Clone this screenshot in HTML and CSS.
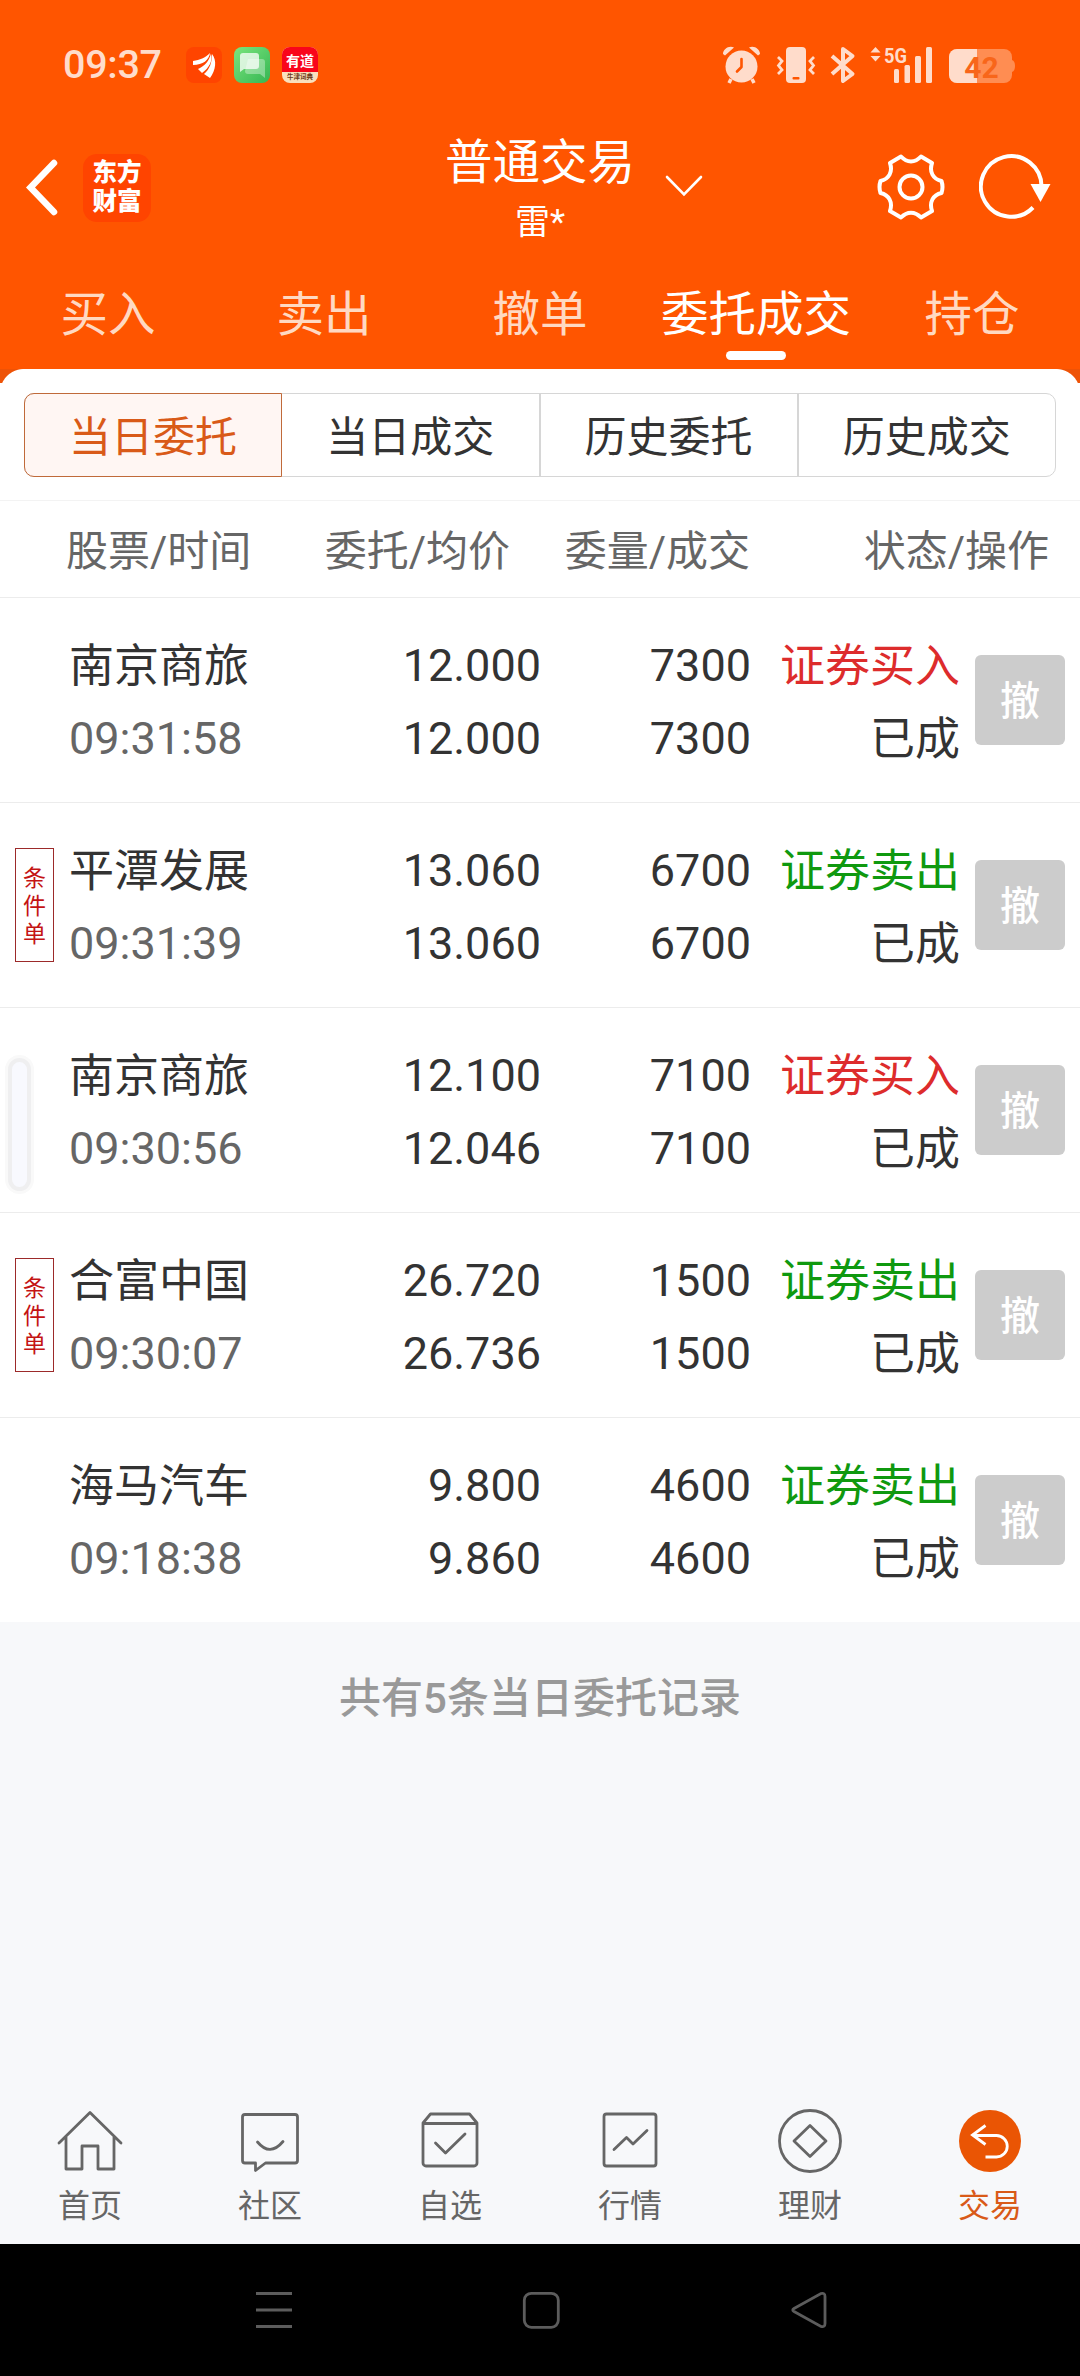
FILE: index.html
```html
<!DOCTYPE html>
<html lang="zh-CN">
<head>
  <meta charset="UTF-8" />
  <meta name="viewport" content="width=device-width, initial-scale=1" />
  <title>普通交易</title>
  <link rel="stylesheet" href="styles.css">
</head>
<body>

<header class="header">
  <div class="status-bar">
    <span class="clock">09:37</span>
    <div class="notifications">
      <div class="app app-em">
        <svg width="36" height="36" viewBox="0 0 36 36" fill="#fff">
          <path d="M7 14C14 13 19 11 24 6C23 13 17 18 7 18Z" />
          <path d="M12 22C19 19 23 14 25 6.500C27 14 23 21 16 26Z" />
          <path d="M18 27C24 22 26 15 26 7C31 13 30 23 24 31Z" />
        </svg>
      </div>
      <div class="app app-sms">
        <svg width="36" height="36" viewBox="0 0 36 36">
          <path d="M14 12H28a3 3 0 0 1 3 3V31L26 27H14a3 3 0 0 1-3-3Z" fill="#fff" opacity=".35" />
          <path d="M9 6H22a3 3 0 0 1 3 3V19a3 3 0 0 1-3 3H10L6 25V9a3 3 0 0 1 3-3Z" fill="#fff" opacity=".75" />
        </svg>
      </div>
      <div class="app app-youdao">
        <span class="youdao-name">有道</span>
        <span class="youdao-sub">牛津词典</span>
      </div>
    </div>
    <svg class="system-icons" width="300" height="44" viewBox="0 0 300 44" fill="#ffdccb">
      <!-- alarm -->
      <circle cx="21.500" cy="23.500" r="16" />
      <path d="M3 11C3 6 9 2 14 4.500L5 12.500ZM40 11C40 6 34 2 29 4.500L38 12.500Z" />
      <path d="M11 36L9 40M32 36L34 40" stroke="#ffdccb" stroke-width="3.500" />
      <path d="M21.500 16V24L17 28.500" fill="none" stroke="#ff5500" stroke-width="2.600" stroke-linecap="round" stroke-linejoin="round" />
      <!-- vibrate -->
      <rect x="66" y="4" width="20" height="36" rx="4" />
      <rect x="72.500" y="34" width="7" height="2.400" rx="1" fill="#ff5500" />
      <path d="M58 14L62 18L58.500 22.500L62 27L58 31M94 14L90 18L93.500 22.500L90 27L94 31" fill="none" stroke="#ffdccb" stroke-width="2.800" />
      <!-- bluetooth -->
      <path d="M112 13L132.500 31L123 38V6L132.500 13L112 31" fill="none" stroke="#ffdccb" stroke-width="4" stroke-linejoin="round" />
      <!-- mobile signal -->
      <path d="M150.500 9.500L155.500 4L160.500 9.500ZM150.500 13L155.500 18.500L160.500 13Z" />
      <text class="net" x="164" y="19.500" textLength="23" lengthAdjust="spacingAndGlyphs">5G</text>
      <rect x="174" y="26" width="5" height="14" rx="1.500" />
      <rect x="184.500" y="22" width="5.500" height="18" rx="1.500" />
      <rect x="195" y="13" width="6" height="27" rx="1.500" />
      <rect x="206" y="4" width="6" height="36" rx="1.500" />
      <!-- battery -->
      <rect x="229" y="6" width="63" height="34" rx="8" fill="#ff8d52" />
      <path d="M292 17Q295 18 295 23T292 29Z" fill="#ff8d52" />
      <path d="M257 6H237a8 8 0 0 0-8 8V32a8 8 0 0 0 8 8H257Z" />
      <text class="level" x="261.500" y="34.500" text-anchor="middle">42</text>
    </svg>
  </div>

  <div class="title-bar">
    <div class="title-left">
      <svg width="34" height="60" viewBox="0 0 34 60" fill="none" stroke="#fff" stroke-width="6.500" stroke-linecap="round">
        <path d="M30 5L6.500 29.500L30 54" />
      </svg>
      <div class="logo">东方<br>财富</div>
    </div>
    <div class="account">
      <div class="account-type">普通交易</div>
      <div class="account-name">雷*</div>
    </div>
    <svg class="arrow" width="38" height="24" viewBox="0 0 38 24" fill="none" stroke="#fff" stroke-width="2.600" stroke-linecap="round">
      <path d="M2 2L19 19.500L36 2" />
    </svg>
    <div class="title-right">
      <svg width="68" height="68" viewBox="0 0 68 68" fill="none" stroke="#fff" stroke-width="4" stroke-linejoin="round">
        <path d="M24 3.500C30 10 38 10 44 3.500L55 10C52 19 56 26 64.500 28Q66.500 34 64.500 40C56 42 52 49 55 58L44 64.500C38 58 30 58 24 64.500L13 58C16 49 12 42 3.500 40Q1.500 34 3.500 28C12 26 16 19 13 10Z" />
        <circle cx="34" cy="34" r="11.500" />
      </svg>
      <svg width="72" height="68" viewBox="0 0 72 68">
        <path d="M54 54.500A30.300 30.300 0 1 1 62.500 34" fill="none" stroke="#fff" stroke-width="4" />
        <path d="M51.500 31H71.500L61.500 49Z" fill="#fff" />
      </svg>
    </div>
  </div>

  <nav class="tabs">
    <a class="tab">买入</a>
    <a class="tab">卖出</a>
    <a class="tab">撤单</a>
    <a class="tab active">委托成交</a>
    <a class="tab">持仓</a>
  </nav>
</header>

<main class="main">
  <div class="corner-bg">
    <div class="segments">
      <a class="segment active">当日委托</a>
      <a class="segment">当日成交</a>
      <a class="segment">历史委托</a>
      <a class="segment">历史成交</a>
    </div>
  </div>

  <div class="list-head">
    <span>股票/时间</span>
    <span>委托/均价</span>
    <span>委量/成交</span>
    <span>状态/操作</span>
  </div>

  <div class="order">
    <div class="mark"></div>
    <div class="name">南京商旅<br><span class="time">09:31:58</span></div>
    <div class="num">12.000<br>12.000</div>
    <div class="num">7300<br>7300</div>
    <div class="state"><span class="buy">证券买入</span><br>已成</div>
    <button class="cancel">撤</button>
  </div>
  <div class="order">
    <div class="mark"><span class="cond">条件单</span></div>
    <div class="name">平潭发展<br><span class="time">09:31:39</span></div>
    <div class="num">13.060<br>13.060</div>
    <div class="num">6700<br>6700</div>
    <div class="state"><span class="sell">证券卖出</span><br>已成</div>
    <button class="cancel">撤</button>
  </div>
  <div class="order">
    <div class="mark"></div>
    <div class="name">南京商旅<br><span class="time">09:30:56</span></div>
    <div class="num">12.100<br>12.046</div>
    <div class="num">7100<br>7100</div>
    <div class="state"><span class="buy">证券买入</span><br>已成</div>
    <button class="cancel">撤</button>
    <i class="edge-handle"></i>
  </div>
  <div class="order">
    <div class="mark"><span class="cond">条件单</span></div>
    <div class="name">合富中国<br><span class="time">09:30:07</span></div>
    <div class="num">26.720<br>26.736</div>
    <div class="num">1500<br>1500</div>
    <div class="state"><span class="sell">证券卖出</span><br>已成</div>
    <button class="cancel">撤</button>
  </div>
  <div class="order">
    <div class="mark"></div>
    <div class="name">海马汽车<br><span class="time">09:18:38</span></div>
    <div class="num">9.800<br>9.860</div>
    <div class="num">4600<br>4600</div>
    <div class="state"><span class="sell">证券卖出</span><br>已成</div>
    <button class="cancel">撤</button>
  </div>
</main>

<p class="summary">共有5条当日委托记录</p>

<nav class="bottom-bar">
  <a class="item">
    <svg width="68" height="68" viewBox="0 0 68 68">
      <path d="M3 35L34 4.500L65 35M10 29V61H26V38H42V61H58V29" />
    </svg>
    首页
  </a>
  <a class="item">
    <svg width="68" height="68" viewBox="0 0 68 68">
      <path d="M9 6.500H59a2.500 2.500 0 0 1 2.500 2.500V52.500a2.500 2.500 0 0 1-2.500 2.500H29.500L19.500 62.500V55H9a2.500 2.500 0 0 1-2.500-2.500V9A2.500 2.500 0 0 1 9 6.500Z" />
      <path d="M21.500 34Q34 49 47 33.500" />
    </svg>
    社区
  </a>
  <a class="item">
    <svg width="68" height="68" viewBox="0 0 68 68">
      <path d="M7 15L14.500 6H53.500L61 15V55a3 3 0 0 1-3 3H10a3 3 0 0 1-3-3ZM7 15.500H61M19.500 35L29.500 45L49 26" />
    </svg>
    自选
  </a>
  <a class="item">
    <svg width="68" height="68" viewBox="0 0 68 68">
      <rect x="8" y="6" width="52" height="52" rx="2.500" />
      <path d="M18 41.500L30.500 29.500L37 36L51 22.500" />
    </svg>
    行情
  </a>
  <a class="item">
    <svg width="68" height="68" viewBox="0 0 68 68">
      <circle cx="34" cy="33" r="30.500" />
      <path d="M34 17.500L50 33L34 48.500L18 33Z" />
    </svg>
    理财
  </a>
  <a class="item active">
    <svg width="68" height="68" viewBox="0 0 68 68">
      <circle class="disc" cx="34" cy="33" r="31" />
      <path class="back" d="M29.500 17.500L16.500 27L29.500 36.500M17 27.500H40.500a10.500 10.500 0 0 1 0 21.500H29.500" />
    </svg>
    交易
  </a>
</nav>

<footer class="system-nav">
  <svg width="40" height="40" viewBox="0 0 40 40">
    <path d="M2 3.500H38M2 20H38M2 36.500H38" />
  </svg>
  <svg width="40" height="40" viewBox="0 0 40 40">
    <rect x="3.300" y="3.300" width="34" height="34" rx="7" />
  </svg>
  <svg width="40" height="40" viewBox="0 0 40 40">
    <path d="M6 18.500L33 3.500Q37 2.500 37 6.500V33.500Q37 37.500 33 36.500L6 21.500Q3.500 20 6 18.500Z" />
  </svg>
</footer>

</body>
</html>
```
FILE: styles.css
```css
* {
  box-sizing: border-box;
}
body {
  margin: 0;
  width: 1080px;
  height: 2376px;
  display: flex;
  flex-direction: column;
  background: #f7f8fa;
  color: #333;
  font-family: Roboto, "Noto Sans CJK SC", sans-serif;
  overflow: hidden;
}
svg {
  display: block;
  flex: none;
}

/* header */
.header {
  height: 369px;
  background: #ff5500;
  color: #fff;
}
.status-bar {
  height: 130px;
  padding: 0 62px 0 63px;
  display: flex;
  align-items: center;
}
.clock {
  width: 123px;
  font-size: 39.5px;
  font-weight: 500;
  line-height: 40px;
  letter-spacing: -0.3px;
  color: #ffdccb;
}
.notifications {
  display: flex;
  gap: 12px;
}
.app {
  width: 36px;
  height: 36px;
  border-radius: 8px;
  overflow: hidden;
}
.app-em {
  background: #ff4400;
}
.app-sms {
  background: linear-gradient(135deg, #7be57d, #35b653);
}
.app-youdao {
  display: flex;
  flex-direction: column;
  align-items: center;
  background: #f9e0bd;
}
.youdao-name {
  width: 36px;
  height: 25px;
  background: #f9051b;
  font-size: 14px;
  font-weight: 700;
  line-height: 28px;
  text-align: center;
}
.youdao-sub {
  font-size: 6.5px;
  font-weight: 700;
  line-height: 10px;
  color: #6b3a1a;
}
.system-icons {
  margin-left: auto;
  margin-right: -62px;
  width: 360px;
  padding-right: 60px;
}
.net {
  font-size: 21px;
  font-weight: 700;
}
.level {
  font-size: 30px;
  font-weight: 700;
  fill: #f8661a;
}

.title-bar {
  height: 130px;
  display: grid;
  grid-template-columns: 440px 200px 237px 203px;
}
.title-left {
  display: flex;
  align-items: center;
  gap: 25px;
  height: 115px;
  padding-left: 24px;
}
.logo {
  width: 68px;
  height: 68px;
  padding-top: 4px;
  border-radius: 14px;
  background: #ff4400;
  font-size: 24.5px;
  font-weight: 900;
  line-height: 29px;
  text-align: center;
}
.account {
  text-align: center;
}
.account-type {
  font-size: 47.5px;
  line-height: 66px;
}
.account-name {
  font-size: 35px;
  line-height: 54px;
}
.arrow {
  margin: 45px 0 0 25px;
}
.title-right {
  display: flex;
  align-items: center;
  gap: 34px;
  height: 114px;
}

.tabs {
  display: flex;
  height: 109px;
}
.tab {
  flex: 1;
  display: flex;
  flex-direction: column;
  align-items: center;
  font-size: 47.5px;
  line-height: 91px;
  padding-top: 10px;
  color: #ffd9c2;
  white-space: nowrap;
}
.tab.active {
  color: #fff;
}
.tab.active::after {
  content: "";
  width: 60px;
  height: 9px;
  margin-top: -10px;
  border-radius: 5px;
  background: #fff;
}

/* order list */
.main {
  background: #fff;
}
.corner-bg {
  height: 131px;
  background: radial-gradient(circle at 24px 24px, #fff 23.5px, transparent 24.5px) 0 0 / 24px 14px no-repeat,
    radial-gradient(circle at 0 24px, #fff 23.5px, transparent 24.5px) 100% 0 / 24px 14px no-repeat,
    linear-gradient(#fff, #fff) 24px 0 / 1032px 14px no-repeat,
    linear-gradient(#ee5307 14px, #fff 14px);
  padding: 24px 24px 0;
}
.segments {
  display: flex;
  height: 84px;
  border: 1px solid #d6d6d6;
  border-radius: 10px;
}
.segment {
  flex: 1;
  border-left: 2px solid #d6d6d6;
  font-size: 42px;
  line-height: 87px;
  height: 82px;
  text-align: center;
}
.segment:first-child {
  border-left: 0;
}
.segment.active {
  height: 84px;
  margin: -1px -2px -1px -1px;
  position: relative;
  border: 1.5px solid #c06a3a;
  border-radius: 10px 0 0 10px;
  background: #fff6f3;
  color: #d95a18;
}
.list-head {
  height: 98px;
  display: grid;
  grid-template-columns: 200px 244px 240px 299px;
  padding-left: 66px;
  border-top: 1px solid #f3f3f3;
  border-bottom: 1px solid #ececec;
  font-size: 42px;
  line-height: 101px;
  color: #666;
  text-align: right;
}
.list-head span:first-child {
  text-align: left;
}
.order {
  position: relative;
  height: 205px;
  display: grid;
  grid-template-columns: 69px 191px 281px 210px 209px 120px;
  border-bottom: 1px solid #ececec;
  font-size: 45px;
  line-height: 73px;
  white-space: nowrap;
}
.order:last-child {
  height: 204px;
  border-bottom: 0;
}
.name,
.num,
.state {
  padding-top: 31px;
}
.num,
.state {
  text-align: right;
}
.name,
.state {
  padding-top: 32px;
}
.time {
  position: relative;
  top: -1px;
  color: #666;
}
.buy {
  color: #dd2c2c;
}
.sell {
  color: #0f990f;
}
.cond {
  display: block;
  width: 39px;
  height: 114px;
  margin: 45px 0 0 15px;
  padding: 16px 7px 0;
  border: 1px solid #9c2a2a;
  font-size: 23px;
  line-height: 28px;
  color: #c41414;
  white-space: normal;
}
.cancel {
  width: 90px;
  height: 90px;
  margin: 57px 0 0 15px;
  padding: 3px 0 0;
  border: 0;
  border-radius: 6px;
  background: #ccc;
  color: #fff;
  font: 500 40px/87px Roboto, "Noto Sans CJK SC", sans-serif;
}
/* system edge panel, floats over the list */
.edge-handle {
  position: absolute;
  left: 8px;
  top: 50px;
  width: 23px;
  height: 133px;
  border: 4px solid #efeff0;
  border-radius: 12px;
  background: #f8f9fe;
  box-shadow: 0 0 0 3px #f9f9f9;
}

.summary {
  flex: 1;
  margin: 0;
  padding-top: 46px;
  font-size: 42px;
  font-weight: 500;
  line-height: 62px;
  color: #999;
  text-align: center;
}

/* bottom bar */
.bottom-bar {
  height: 144px;
  display: flex;
  background: #f7f8fa;
}
.item {
  flex: 1;
  display: flex;
  flex-direction: column;
  align-items: center;
  padding-top: 8px;
  font-size: 32px;
  line-height: 60px;
  color: #666;
}
.item svg {
  fill: none;
  stroke: #666;
  stroke-width: 2.8;
  stroke-linecap: round;
  stroke-linejoin: round;
}
.item.active {
  color: #d95a18;
}
.item .disc {
  fill: #ea5504;
  stroke: none;
}
.item .back {
  stroke: #fff;
  stroke-linecap: butt;
  stroke-linejoin: miter;
}
.system-nav {
  height: 132px;
  display: flex;
  align-items: center;
  justify-content: space-between;
  padding: 0 252px 0 254px;
  background: #000;
}
.system-nav svg {
  fill: none;
  stroke: #5c5c5c;
  stroke-width: 2.8;
}
```
